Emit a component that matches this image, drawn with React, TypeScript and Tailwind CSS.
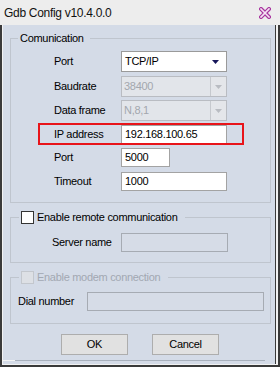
import React from "react";

function Combo({ value, disabled }: { value: string; disabled?: boolean }) {
  if (disabled) {
    return (
      <div className="w-[106px] h-[21px] border border-[#b9bcc2] bg-[#dfe3ea] flex items-stretch">
        <div className="flex-1 flex items-center pl-[2px] text-[#a3a7ae] bg-[#e2e5ea]">{value}</div>
        <div className="w-[16px] border-l border-[#c6c9ce] bg-[#e4e6ea] flex items-center justify-center">
          <svg width="7" height="4" viewBox="0 0 7 4"><path d="M0 0 L7 0 L3.5 4 Z" fill="#b9bcc2" /></svg>
        </div>
      </div>
    );
  }
  return (
    <div className="w-[106px] h-[21px] border border-[#9a9a9a] bg-white flex items-center justify-between pl-[3px] pr-[7px]">
      <span>{value}</span>
      <svg width="7" height="4" viewBox="0 0 7 4"><path d="M0 0 L7 0 L3.5 4 Z" fill="#16165a" /></svg>
    </div>
  );
}

function Input({ value, w, disabled }: { value?: string; w: string; disabled?: boolean }) {
  return (
    <div
      className={
        "h-[19px] border flex items-center pl-[3px] " +
        w +
        (disabled ? " border-[#a6abb3] bg-[#d6dce7]" : " border-[#a3a3a3] bg-white")
      }
    >
      {value}
    </div>
  );
}

export default function App() {
  return (
    <div className="w-[280px] h-[367px] flex flex-col bg-[#ededed] font-['Liberation_Sans',Arial,sans-serif] text-[11px] tracking-[-0.3px] text-black overflow-hidden">
      <div className="h-[25px] shrink-0 flex items-center justify-between pl-[4px] pr-[9px] text-[12px] text-[#111]">
        <span>Gdb Config v10.4.0.0</span>
        <svg width="12" height="12" viewBox="0 0 12 12">
          <path d="M2 2 L10 10 M10 2 L2 10" stroke="#a8359f" strokeWidth="4" strokeLinecap="square" />
          <path d="M2 2 L10 10 M10 2 L2 10" stroke="#f6e3f5" strokeWidth="1.6" strokeLinecap="square" />
        </svg>
      </div>
      <div className="flex-1 flex flex-col border-l-2 border-r-2 border-b-2 border-[#3a3a3a]">
        <div className="flex-1 flex flex-col border-l border-r-2 border-b border-[#f2f2f2]">
          <div className="flex-1 flex flex-col border-r border-[#3a3a3a] bg-[#d4dbe7]">
            {/* Group 1 */}
            <div className="mt-[13px] ml-[7px] w-[261px] border border-[#bfc5ce] flex flex-col pb-[11px]">
              <div className="-mt-[8px] ml-[7px] self-start h-[14px] leading-[14px] px-[2px] pr-[6px] bg-[#d4dbe7]">Comunication</div>
              <div className="mt-[6px] h-[21px] flex items-center pl-[43px]">
                <span className="w-[67px]">Port</span>
                <Combo value="TCP/IP" />
              </div>
              <div className="mt-[4px] h-[21px] flex items-center pl-[43px]">
                <span className="w-[67px]">Baudrate</span>
                <Combo value="38400" disabled />
              </div>
              <div className="mt-[3px] h-[21px] flex items-center pl-[43px]">
                <span className="w-[67px]">Data frame</span>
                <Combo value="N,8,1" disabled />
              </div>
              <div className="relative mt-[4px] h-[19px] flex items-center pl-[43px]">
                <span className="w-[67px]">IP address</span>
                <Input value="192.168.100.65" w="w-[106px]" />
                <div className="absolute left-[27px] top-[-2px] w-[206px] h-[22px] border-2 border-[#e8141a]" />
              </div>
              <div className="mt-[4px] h-[19px] flex items-center pl-[43px]">
                <span className="w-[67px]">Port</span>
                <Input value="5000" w="w-[49px]" />
              </div>
              <div className="mt-[5px] h-[19px] flex items-center pl-[43px]">
                <span className="w-[67px]">Timeout</span>
                <Input value="1000" w="w-[106px]" />
              </div>
            </div>
            {/* Group 2 */}
            <div className="mt-[14px] ml-[7px] w-[261px] border border-[#bfc5ce] flex flex-col pb-[10px]">
              <div className="-mt-[8px] ml-[8px] self-start h-[14px] flex items-center pl-[2px] pr-[8px] bg-[#d4dbe7]">
                <div className="w-[13px] h-[13px] border border-[#333] bg-white" />
                <span className="ml-[3px]">Enable remote communication</span>
              </div>
              <div className="mt-[9px] h-[19px] flex items-center pl-[41px]">
                <span className="w-[69px]">Server name</span>
                <Input w="w-[107px]" disabled />
              </div>
            </div>
            {/* Group 3 */}
            <div className="mt-[14px] ml-[7px] w-[261px] border border-[#bfc5ce] flex flex-col pb-[12px]">
              <div className="-mt-[8px] ml-[8px] self-start h-[14px] flex items-center pl-[2px] pr-[8px] bg-[#d4dbe7] text-[#a2a8b2]">
                <div className="w-[13px] h-[13px] border border-[#c3c7cd] bg-[#dde0e5]" />
                <span className="ml-[3px]">Enable modem connection</span>
              </div>
              <div className="mt-[8px] h-[19px] flex items-center pl-[7px]">
                <span className="w-[69px]">Dial number</span>
                <Input w="w-[177px]" disabled />
              </div>
            </div>
            {/* Buttons */}
            <div className="mt-[10px] flex pl-[58px] gap-[24px]">
              <div className="w-[67px] h-[21px] border border-[#adadad] bg-[#e1e1e1] flex items-center justify-center">OK</div>
              <div className="w-[67px] h-[21px] border border-[#adadad] bg-[#e1e1e1] flex items-center justify-center">Cancel</div>
            </div>
            <div className="mt-[5px] flex h-[1px]">
              <div className="w-[12px] bg-[#f4f4f4]" />
              <div className="w-[250px] bg-[#a9b1bd]" />
            </div>
          </div>
        </div>
      </div>
    </div>
  );
}
